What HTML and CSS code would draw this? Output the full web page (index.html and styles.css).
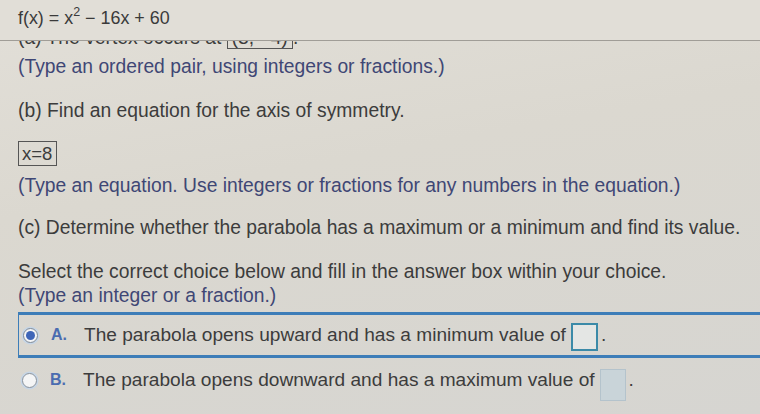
FILE: index.html
```html
<!DOCTYPE html>
<html>
<head>
<meta charset="utf-8">
<link rel="stylesheet" href="styles.css">
</head>
<body>
<div class="header">
  <span class="fn">f(x) = x<sup>2</sup> − 16x + 60</span>
</div>
<div class="content">
  <div class="clip">
    <p class="q scrolled">(a) The vertex occurs at <span class="ansinline">(8, −4)</span>.</p>
  </div>
  <p class="hint h1">(Type an ordered pair, using integers or fractions.)</p>
  <p class="q qb">(b) Find an equation for the axis of symmetry.</p>
  <div class="ansbox">x=8</div>
  <p class="hint h2">(Type an equation. Use integers or fractions for any numbers in the equation.)</p>
  <p class="q qc">(c) Determine whether the parabola has a maximum or a minimum and find its value.</p>
  <p class="q sel">Select the correct choice below and fill in the answer box within your choice.</p>
  <p class="hint h3">(Type an integer or a fraction.)</p>
  <div class="choice selected">
    <span class="radio on"></span>
    <span class="letter">A.</span>
    <span class="ctext">The parabola opens upward and has a minimum value of</span>
    <span class="input active"></span><span class="dot">.</span>
  </div>
  <div class="choice">
    <span class="radio"></span>
    <span class="letter">B.</span>
    <span class="ctext">The parabola opens downward and has a maximum value of</span>
    <span class="input idle"></span><span class="dot">.</span>
  </div>
</div>
</body>
</html>
```
FILE: styles.css
```css
html, body {
  margin: 0;
  padding: 0;
}
body {
  width: 760px;
  height: 414px;
  overflow: hidden;
  font-family: "Liberation Sans", Arial, sans-serif;
  color: #3a3a3a;
  background: linear-gradient(170deg, #e2dfd8 0%, #dbd8d0 40%, #d6d5d1 100%);
}
p { margin: 0; }

.header {
  height: 41px;
  border-bottom: 1px solid #a09d97;
  box-sizing: border-box;
  padding: 7px 0 0 18px;
  background: #e1ded7;
}
.fn {
  font-size: 17.9px;
  line-height: 22px;
  color: #3a3a3a;
}
.fn sup {
  font-size: 12.5px;
  vertical-align: 8px;
  line-height: 0;
}

.content {
  padding-left: 18px;
}
.q {
  font-size: 19.3px;
  line-height: 22px;
  color: #3c3c3c;
}
.hint {
  font-size: 19.3px;
  line-height: 22px;
  color: #3f4775;
}
.clip {
  height: 9px;
  overflow: hidden;
}
.scrolled {
  margin-top: -14px;
  white-space: nowrap;
}
.ansinline {
  display: inline-block;
  border: 1px solid #555;
  padding: 0 4px;
  line-height: 20px;
}
.h1 { margin-top: 6px; }
.qb { margin-top: 22px; }
.ansbox {
  margin-top: 19px;
  width: 39px;
  height: 25px;
  box-sizing: border-box;
  border: 1px solid #555;
  font-size: 18.5px;
  line-height: 23px;
  padding-left: 3px;
  white-space: nowrap;
  color: #3c3c3c;
}
.h2 { margin-top: 9px; }
.qc { margin-top: 20px; }
.sel { margin-top: 21px; line-height: 24px; }
.h3 { line-height: 24px; }

.choice {
  display: flex;
  align-items: center;
  height: 44px;
  font-size: 19.1px;
  color: #3c3c3c;
}
.choice.selected {
  margin-top: 4px;
  border-top: 3px solid #3d7db8;
  border-bottom: 3px solid #3d7db8;
  border-left: 1px solid #3d7db8;
  height: 46px;
  box-sizing: border-box;
}
.radio {
  width: 13px;
  height: 13px;
  border-radius: 50%;
  border: 1.5px solid #8a929b;
  background: #f4f5f6;
  margin-left: 4px;
  box-shadow: 0 0 0 1.5px #c5d5e6;
  position: relative;
  flex: none;
}
.radio.on {
  border-color: #7f8a96;
}
.radio.on::after {
  content: "";
  position: absolute;
  left: 2px;
  top: 2px;
  width: 9px;
  height: 9px;
  border-radius: 50%;
  background: #3f66b8;
}
.letter {
  margin-left: 13px;
  font-weight: bold;
  font-size: 16px;
  color: #4b6cb0;
  width: 33px;
}
.ctext { white-space: nowrap; }
.input {
  display: inline-block;
  box-sizing: border-box;
  margin-left: 5px;
  flex: none;
}
.input.active {
  width: 27px;
  height: 28px;
  border: 2px solid #3b8aa8;
  background: #e4e6e4;
  margin-top: 3px;
}
.input.idle {
  width: 26px;
  height: 32px;
  border: 1px solid #b4c3cc;
  background: #c9d4d9;
  margin-top: 10px;
}
.dot { margin-left: 3px; }
```
